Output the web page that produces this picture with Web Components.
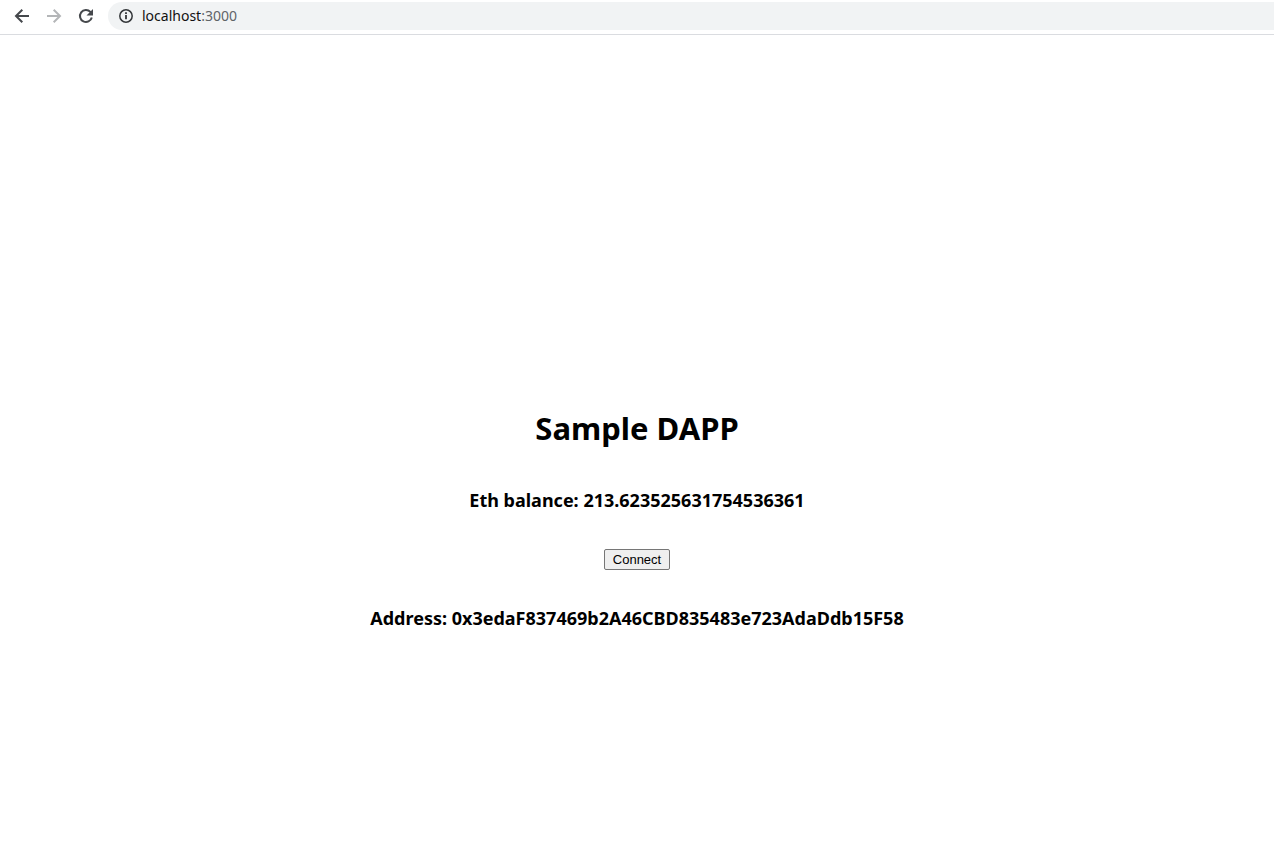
<!DOCTYPE html>
<html lang="en">
<head>
<meta charset="utf-8">
<title>Sample DAPP</title>
<style>
body { margin: 0; background: #fff; color: #000; font-family: "Noto Sans", "Open Sans", sans-serif; }
</style>
</head>
<body>
<dapp-window></dapp-window>
<script>
const define = (name, html) => {
  const template = document.createElement("template");
  template.innerHTML = html;
  customElements.define(name, class extends HTMLElement {
    constructor() {
      super();
      this.attachShadow({ mode: "open" }).append(template.content.cloneNode(true));
    }
  });
};

define("nav-button", `
<style>
:host { display: block; color: #45484c; }
:host([muted]) { color: #b4b6b8; }
button { display: grid; place-items: center; width: 32px; height: 32px; padding: 0; border: 0; background: none; color: inherit; }
</style>
<button type="button"><slot></slot></button>`);

define("address-bar", `
<style>
:host { display: flex; align-items: center; flex: 1; gap: 8px; height: 28px; padding-left: 10px; background: #f1f3f4; border-radius: 14px 0 0 14px; font-size: 14px; color: #5f6368; }
.host { color: #111; }
svg { flex: none; }
</style>
<svg width="16" height="16" viewBox="0 0 16 16" fill="none" stroke="#333639" stroke-width="1.5"><circle cx="8" cy="8" r="6.2"/><path d="M8 7v4.3M8 4.2v1.8" stroke-width="1.8"/></svg>
<span><span class="host"><slot name="host"></slot></span><slot name="port"></slot></span>`);

define("browser-toolbar", `
<style>
:host { display: flex; align-items: center; box-sizing: border-box; height: 35px; padding: 0 0 3px 6px; border-bottom: 1px solid #dadce0; }
address-bar { margin-left: 6px; }
</style>
<nav-button><svg width="16" height="16" viewBox="0 0 16 16" role="img" aria-label="Back" fill="none" stroke="currentColor" stroke-width="2"><path d="M15 8H2.500M8.300 1.700L2 8l6.300 6.300"/></svg></nav-button>
<nav-button muted><svg width="16" height="16" viewBox="0 0 16 16" role="img" aria-label="Forward" fill="none" stroke="currentColor" stroke-width="2"><path d="M1 8h12.500M7.700 1.700L14 8l-6.300 6.300"/></svg></nav-button>
<nav-button><svg width="16" height="16" viewBox="0 0 16 16" role="img" aria-label="Reload" fill="none" stroke="currentColor" stroke-width="2"><path d="M13.800 9.500A6 6 0 1 1 12.400 3.900L13.200 4.700"/><path d="M15 1v6.500H8.500z" fill="currentColor" stroke="none"/></svg></nav-button>
<address-bar><span slot="host">localhost</span><span slot="port">:3000</span></address-bar>`);

define("wallet-panel", `
<style>
:host { display: flex; flex-direction: column; align-items: center; justify-content: center; box-sizing: border-box; padding-top: 143px; text-align: center; }
h1 { margin: 0; font-size: 31px; line-height: 44px; }
h3 { margin: 0; font-size: 18px; line-height: 25px; }
.items { display: flex; flex-direction: column; align-items: center; gap: 36px; margin-top: 38px; }
button { box-sizing: border-box; height: 21px; padding: 1px 8px; border: 1px solid #767676; border-radius: 2px; background: #efefef; color: #000; font: 13px "Liberation Sans", Arial, sans-serif; }
</style>
<h1>Sample DAPP</h1>
<div class="items">
<h3>Eth balance: <slot name="balance"></slot></h3>
<button type="button">Connect</button>
<h3>Address: <slot name="address"></slot></h3>
</div>`);

define("dapp-window", `
<style>
:host { display: flex; flex-direction: column; min-height: 100vh; }
wallet-panel { flex: 1; }
</style>
<browser-toolbar></browser-toolbar>
<wallet-panel><span slot="balance">213.623525631754536361</span><span slot="address">0x3edaF837469b2A46CBD835483e723AdaDdb15F58</span></wallet-panel>`);
</script>
</body>
</html>
